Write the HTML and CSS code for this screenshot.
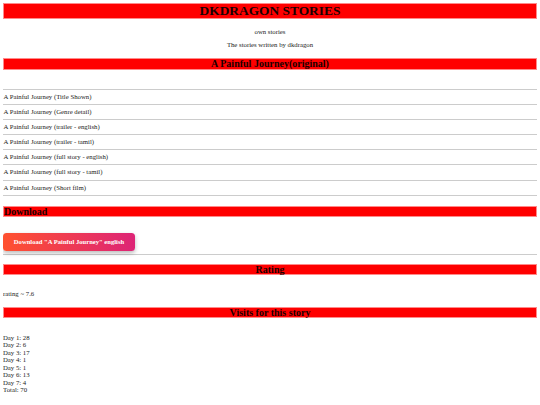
FILE: index.html
```html
<!DOCTYPE html>
<html lang="en">
<head>
<meta charset="utf-8">
<title>DKDRAGON STORIES</title>
<link rel="stylesheet" href="styles.css">
</head>
<body>
<header class="site-head">
  <h1 class="bar bar-title">DKDRAGON STORIES</h1>
  <p class="tagline">own stories</p>
  <p class="tagline tagline-2">The stories written by dkdragon</p>
</header>

<section class="story">
  <h2 class="bar bar-story">A Painful Journey(original)</h2>
  <ul class="episodes">
    <li>A Painful Journey (Title Shown)</li>
    <li>A Painful Journey (Genre detail)</li>
    <li>A Painful Journey (trailer - english)</li>
    <li>A Painful Journey (trailer - tamil)</li>
    <li>A Painful Journey (full story - english)</li>
    <li>A Painful Journey (full story - tamil)</li>
    <li>A Painful Journey (Short film)</li>
  </ul>
</section>

<section class="download">
  <h2 class="bar bar-left bar-download">Download</h2>
  <div class="dl-row">
    <a class="dl-btn" href="#">Download "A Painful Journey" english</a>
  </div>
</section>

<section class="rating">
  <h2 class="bar bar-rating">Rating</h2>
  <p class="rating-text">rating ~ 7.6</p>
</section>

<section class="visits">
  <h2 class="bar bar-visits">Visits for this story</h2>
  <div class="visit-list">
    <div>Day 1: 28</div>
    <div>Day 2: 6</div>
    <div>Day 3: 17</div>
    <div>Day 4: 1</div>
    <div>Day 5: 1</div>
    <div>Day 6: 13</div>
    <div>Day 7: 4</div>
    <div>Total: 70</div>
  </div>
</section>
</body>
</html>
```

FILE: styles.css
```css
html, body {
  background: #ffffff;
}

body {
  margin: 3px;
  font-family: "Liberation Serif", "Times New Roman", serif;
  font-size: 6.75px;
  line-height: 7.6px;
  color: #222222;
}

.bar {
  margin: 0;
  background: #ff0000;
  border: 1px solid #ff8a8a;
  color: #1a0000;
  font-weight: bold;
  text-align: center;
  font-size: 10px;
  line-height: 9px;
}

.bar-title {
  font-size: 13.4px;
  line-height: 13.5px;
}

.bar-left {
  text-align: left;
}

.tagline {
  margin: 9px 0 0;
  text-align: center;
}

.tagline-2 {
  margin-top: 6.4px;
}

.bar-story {
  margin-top: 9px;
  line-height: 9.5px;
}

.episodes {
  list-style: none;
  margin: 19.4px 0 0;
  padding: 0;
  border-top: 1px solid #cccccc;
}

.episodes li {
  height: 14.1px;
  line-height: 14.1px;
  border-bottom: 1px solid #cccccc;
  padding-left: 0.5px;
}

.bar-download {
  margin-top: 10px;
}

.dl-row {
  margin-top: 16px;
  padding-bottom: 3px;
  border-bottom: 1px solid #cccccc;
}

.dl-btn {
  display: inline-block;
  width: 132px;
  height: 18px;
  line-height: 18px;
  text-align: center;
  border-radius: 3.5px;
  background: linear-gradient(to right, #ff512f, #dd2476);
  color: #ffffff;
  font-weight: bold;
  font-size: 6.6px;
  text-decoration: none;
  box-shadow: 0 2px 4px rgba(0, 0, 0, 0.28);
}

.bar-rating {
  margin-top: 9px;
}

.rating-text {
  margin: 15.7px 0 0;
}

.bar-visits {
  margin-top: 8.7px;
}

.visit-list {
  margin-top: 16px;
  line-height: 7.5px;
}
```
